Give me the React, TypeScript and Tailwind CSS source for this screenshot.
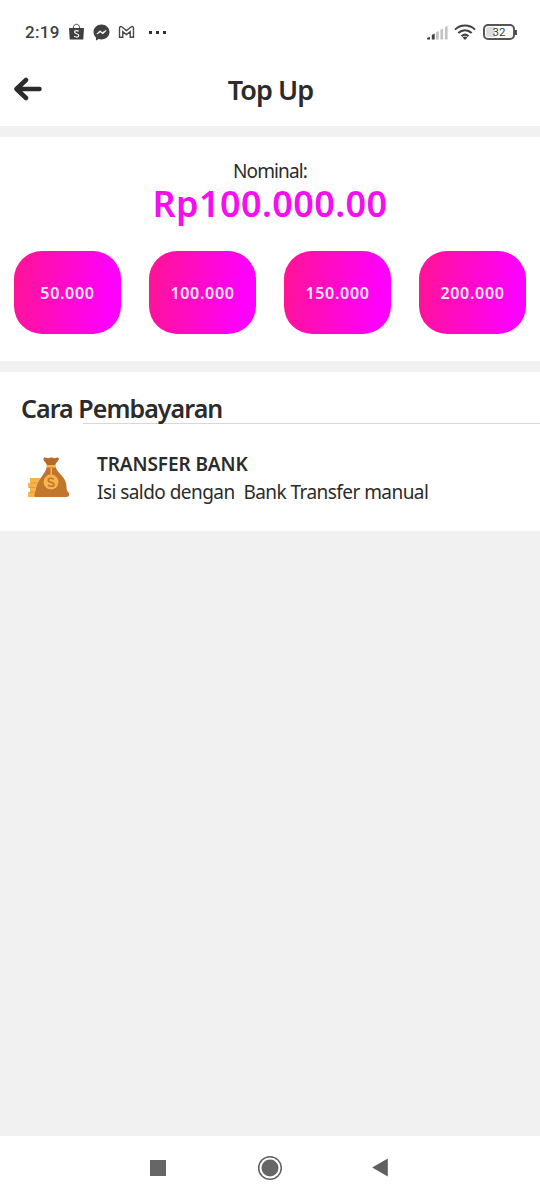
import React from "react";

const nominals = [
  { label: "50.000", value: 50000 },
  { label: "100.000", value: 100000 },
  { label: "150.000", value: 150000 },
  { label: "200.000", value: 200000 },
];

const StatusBar = () => (
  <div className="flex h-16 items-center justify-between bg-white pr-[22px] pl-[25px] text-[#404040]">
    <div className="flex items-center">
      <span className="w-[43px] font-[Roboto] text-[17px] leading-5 font-medium tracking-[0.3px] whitespace-nowrap">
        2:19
      </span>
      {/* Shopee */}
      <svg className="h-[18px] w-[17px]" viewBox="0 0 17 18">
        <path d="M1 5h15l-.7 11.6H1.7z" fill="#404040" />
        <path d="M5.3 5c.1-5 6.2-5 6.4 0" fill="none" stroke="#404040" strokeWidth="1" />
        <path
          d="M10.7 8.3c-1.3-1-4.2-1-4.2.8 0 2 4.3 1.4 4.3 3.5 0 1.9-3.3 1.9-4.7.5"
          fill="none"
          stroke="#fff"
          strokeWidth="1.1"
        />
      </svg>
      {/* Messenger */}
      <svg className="ml-2 h-[17px] w-[17px]" viewBox="0 0 17 17">
        <path
          d="M8.5.5C4 .5.5 3.8.5 8c0 2.3 1 4.2 2.5 5.5v3L5.7 15c.9.2 1.8.4 2.8.4 4.5 0 8-3.2 8-7.4S13 .5 8.5.5z"
          fill="#404040"
        />
        <path d="M3.8 10l3-3.2 2.5 1.7 3.9-2.1-3.2 3.5-2.500-1.800z" fill="#fff" stroke="#fff" strokeWidth=".7" />
      </svg>
      {/* Gmail */}
      <svg className="ml-2 h-3.5 w-[17px]" viewBox="0 0 17 14">
        <path
          d="M1.5 12.2V3.1c0-1.600 1.500-1.900 2.500-1.100l4.500 3.500L13 2c1-.8 2.500-.5 2.500 1.100v9.100h-3.300V6.700L8.500 9.600 4.800 6.700v5.500z"
          fill="none"
          stroke="#484848"
          strokeWidth="1.4"
        />
      </svg>
      <div className="ml-[14px] flex gap-1">
        <span className="h-[3px] w-[3px] bg-[#303030]" />
        <span className="h-[3px] w-[3px] bg-[#303030]" />
        <span className="h-[3px] w-[3px] bg-[#303030]" />
      </div>
    </div>
    <div className="flex items-center">
      <svg className="h-[15px] w-[21px]" viewBox="0 0 21 15">
        <path d="M0 14.500V13l3-1.200v2.700zM4.800 14.500V10l2.900-1.600v6.100z" fill="#404040" />
        <path
          d="M9 14.500V7.200L11.800 6v8.500zM13.400 14.500V4.600l2.700-1.200v11.100zM17.900 14.500V2.100L20.600.8v13.700z"
          fill="#c4c4c4"
        />
      </svg>
      <svg className="ml-[6px] h-4 w-[22px]" viewBox="0 0 22 16" fill="none" stroke="#404040" strokeWidth="2">
        <path d="M1 5.600C6.400.2 15.600.2 21 5.600M4.300 9c3.900-3.800 9.500-3.800 13.400 0M7.500 12.200c2.100-1.900 4.900-1.900 7 0" />
        <path d="M8.600 13.500a3.600 3.600 0 0 1 4.800 0L11 16z" fill="#404040" stroke="none" />
      </svg>
      <div className="ml-[7px] flex items-center">
        <div className="flex h-4 w-8 items-center justify-center rounded-[5px] border-2 border-[#555555] bg-linear-to-r from-[#dddddd] from-35% to-white to-35% bg-clip-content p-px">
          <span className="font-[Roboto] text-[11.5px] leading-3">32</span>
        </div>
        <span className="mr-px h-[5px] w-[2px] bg-[#505050]" />
      </div>
    </div>
  </div>
);

const MoneyBag = () => (
  <svg className="h-[42px] w-[42px]" viewBox="0 0 42 42">
    <g fill="#f7b44c">
      <rect x="3" y="21" width="13" height="5" />
      <rect x="1" y="26" width="13" height="4.5" />
      <rect x="3" y="30.5" width="13" height="4.5" />
      <rect x="1" y="35" width="13" height="5" />
    </g>
    <path d="M4 26h10M2 30.500h10M3 35.200h10" stroke="#e89a36" strokeWidth="1" />
    <path
      d="M20 9.500h8.500c1.500 6 8.700 9.500 10.500 16.500.9 3.500 0 7 2.500 9.500 1.500 2.200.5 4.500-2 4.500H8.500c-2.300-1-.5-4 .3-7C10.300 23 18 17.500 20 9.500z"
      fill="#c2752d"
    />
    <path
      d="M20 8.500c-.5-2.700-3-4.200-3.500-5.800C16.200 0 18.500.3 20 1.100c2 .6 3-.5 4.500-.5s2.500 1.100 4.500.3c2-.9 3.500.2 2.700 1.800-1 1.600-3 2.900-3.500 5.800z"
      fill="#b5692b"
    />
    <path d="M19.500 8.300h9.200v2.200h-9.200zM23.500 10v8h1.500v-8z" fill="#f7b44c" />
    <circle cx="24" cy="25" r="7.5" fill="#f7b44c" />
    <path
      d="M26.800 22.500c-1.500-1.900-5.500-1.500-5.500.7 0 2.700 5.700 1.400 5.700 4.200 0 2.300-4.300 2.500-5.900.5"
      fill="none"
      stroke="#c2752d"
      strokeWidth="1.6"
    />
  </svg>
);

const NavigationBar = () => (
  <div className="flex h-16 items-center bg-white pb-px pl-[150px]">
    <span className="mr-[90px] h-4 w-4 bg-[#666666]" />
    <svg className="h-[26px] w-[26px]" viewBox="0 0 26 26">
      <circle cx="14" cy="13" r="11.3" fill="none" stroke="#606060" strokeWidth="1.5" />
      <circle cx="14" cy="13" r="8.5" fill="#666" />
    </svg>
    <svg className="ml-[90px] h-[19px] w-4" viewBox="0 0 16 19">
      <path d="M.2 9.500L15.800.5v18z" fill="#606060" />
    </svg>
  </div>
);

const App = () => {
  return (
    <div className="flex h-[1200px] w-[540px] flex-col overflow-hidden bg-[#f1f1f1] font-['Noto_Sans',sans-serif] text-[#2b2b2b]">
      <StatusBar />

      {/* Header */}
      <header className="flex h-[62px] items-center bg-white pb-3">
        <svg
          className="ml-[14px] h-7 w-7"
          viewBox="0 0 28 28"
          fill="none"
          stroke="currentColor"
          strokeWidth="4.5"
          strokeLinecap="round"
          strokeLinejoin="round"
        >
          <path d="M12 5L2.500 14l9.500 9M3 14h22.500" />
        </svg>
        <h1 className="mr-[41px] flex-1 pt-0.5 text-center text-[27px] leading-8 font-semibold tracking-[-0.9px]">
          Top Up
        </h1>
      </header>

      {/* Nominal */}
      <section className="mt-[11px] flex h-56 flex-col bg-white px-[14px] pt-5">
        <p className="text-center text-[19px] leading-7 tracking-[-0.85px]">Nominal:</p>
        <p className="text-center text-[36px] leading-[38px] font-semibold tracking-[0.4px] text-[#f60df0]">
          Rp100.000.00
        </p>
        <div className="mt-7 grid grid-cols-4 gap-7">
          {nominals.map((item) => (
            <button
              key={item.value}
              className="h-[83px] rounded-[28px] bg-linear-[98deg] from-[#ff1493] to-[#ff00ff] to-90% text-[16px] font-semibold tracking-[0.7px] text-[#ffe9fc]"
            >
              {item.label}
            </button>
          ))}
        </div>
      </section>

      {/* Cara pembayaran */}
      <section className="mt-[11px] h-[159px] bg-white pt-5">
        <h2 className="pl-[21px] text-[25px] leading-8 font-semibold tracking-[-0.95px]">Cara Pembayaran</h2>
        <div className="-mt-px ml-[83px] h-px bg-[#d8d8d8]" />
        <div className="flex pt-[26px] pl-[27px]">
          <div className="mt-[7px]">
            <MoneyBag />
          </div>
          <div className="ml-7">
            <p className="text-[19px] leading-7 font-semibold tracking-[-0.1px]">TRANSFER BANK</p>
            <p className="text-[19px] leading-7 tracking-[-0.55px] whitespace-pre">
              Isi saldo dengan  Bank Transfer manual
            </p>
          </div>
        </div>
      </section>

      <div className="flex-1" />
      <NavigationBar />
    </div>
  );
};

export default App;
